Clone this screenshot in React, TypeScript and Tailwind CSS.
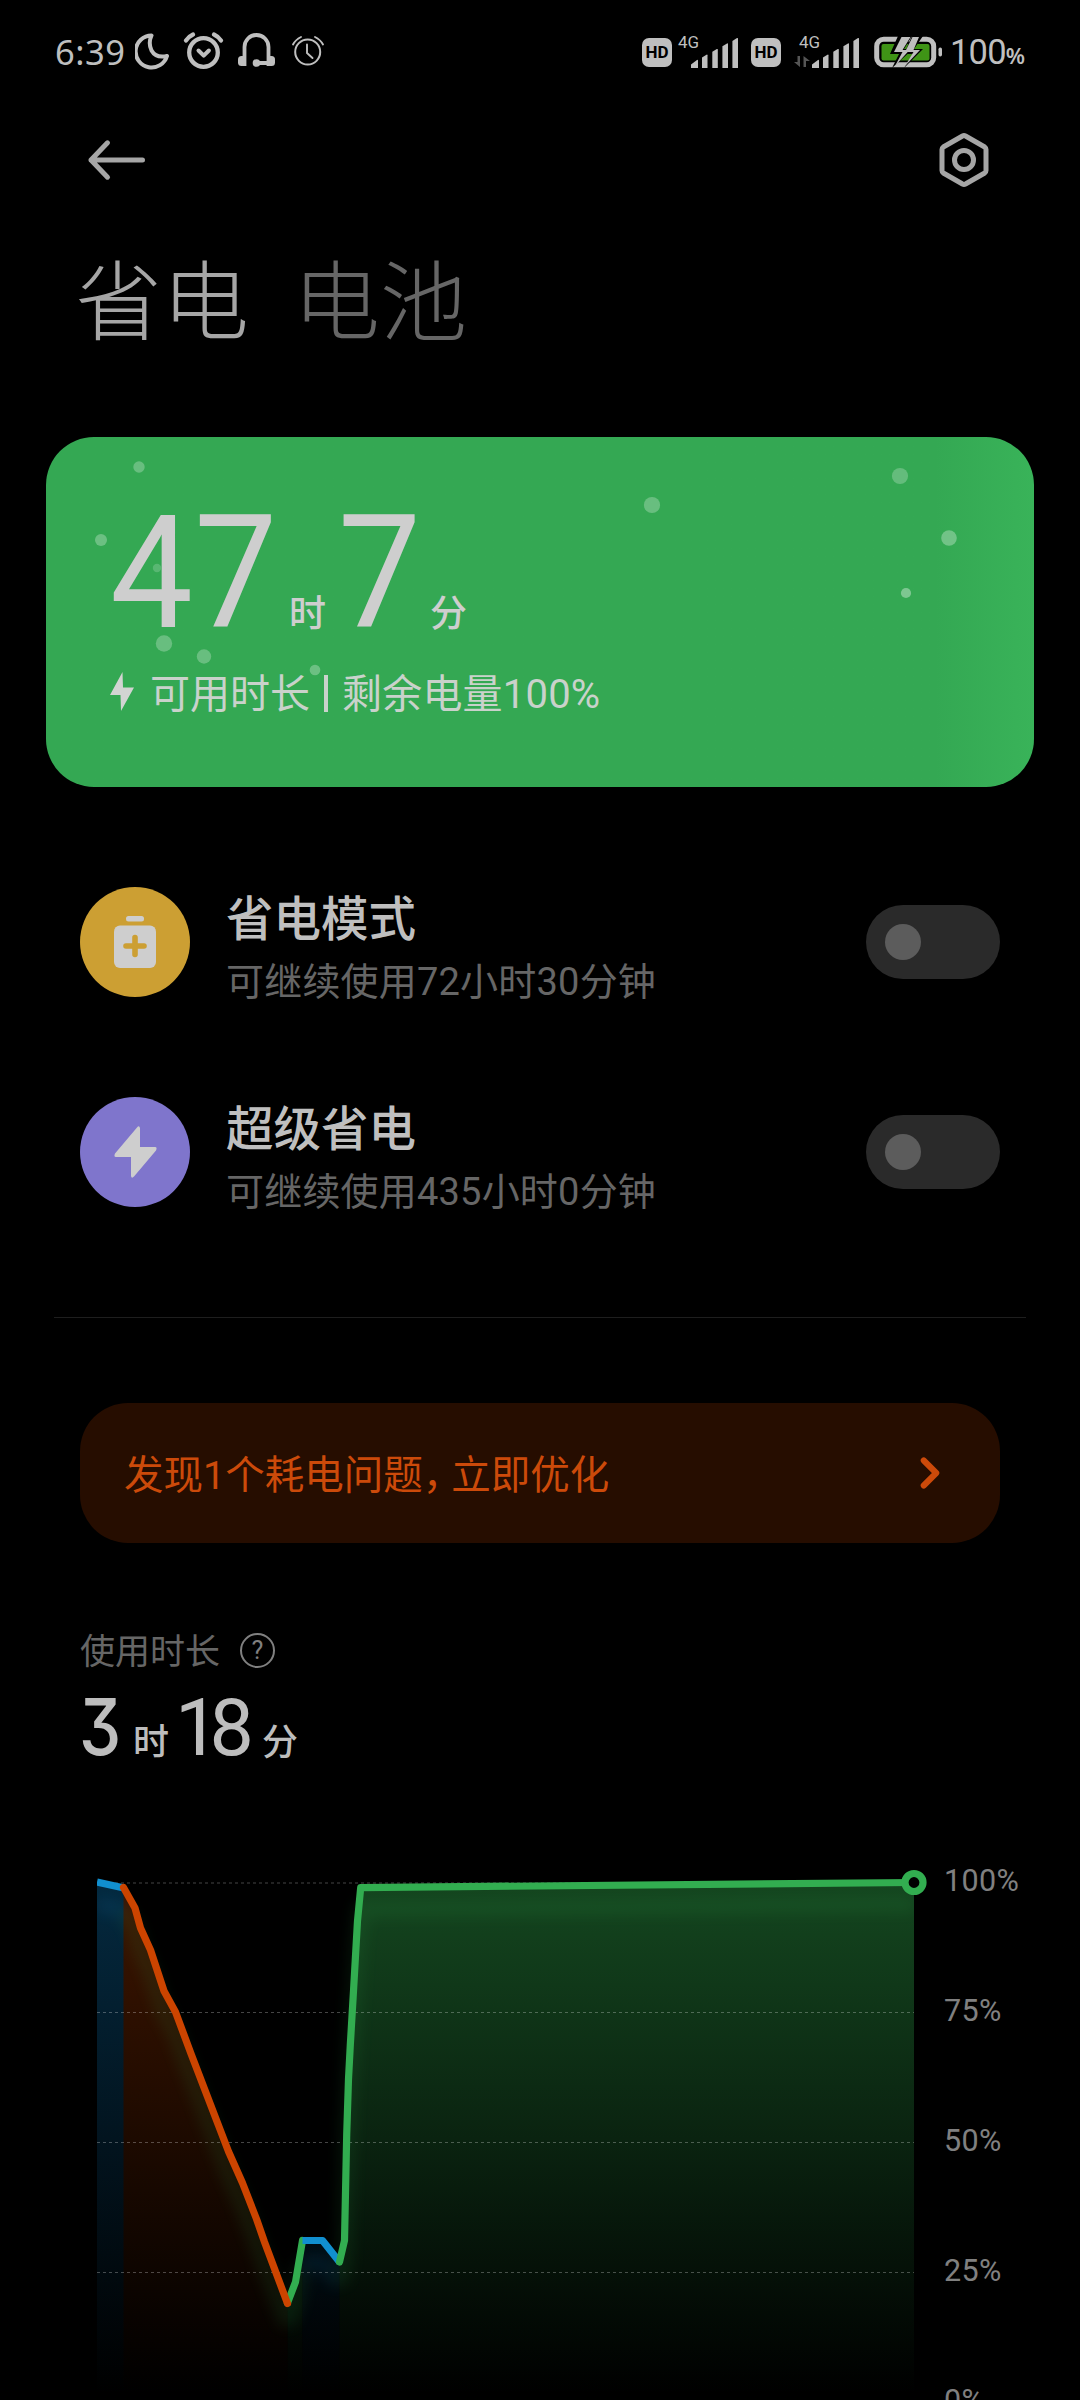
import { ChevronRight } from 'lucide-react'
import type { ReactNode } from 'react'

type Trecho = {
  tipo: 'azul' | 'laranja' | 'verde'
  pontos: [number, number][]
}

const CORES = {
  azul: '#118fcf',
  laranja: '#cc4400',
  verde: '#32ad50',
}

// x from the left edge of the chart, y from the 100% line
const trechos: Trecho[] = [
  { tipo: 'azul', pontos: [[0, -1], [27, 5]] },
  { tipo: 'verde', pontos: [[190.5, 420], [198.5, 399], [205.5, 357.5]] },
  {
    tipo: 'laranja',
    pontos: [
      [26.5, 4.5], [38, 25], [43.5, 45], [53.5, 67], [67, 108], [78.5, 129], [94.5, 172],
      [131.5, 268.5], [145.5, 300], [159.5, 336], [167.5, 359], [190.5, 420.5],
    ],
  },
  { tipo: 'azul', pontos: [[205.5, 357.5], [225.5, 357.5], [242.5, 379]] },
  {
    tipo: 'verde',
    pontos: [
      [242.5, 379], [247.5, 357.5], [249.7, 252], [251.5, 196], [253.3, 162], [256.5, 108],
      [260.5, 38], [263.7, 4.6], [817, -0.5],
    ],
  },
]

const bolhas = [
  { x: 93, y: 30, r: 5.7, o: 0.26 },
  { x: 55, y: 103, r: 6, o: 0.28 },
  { x: 111, y: 131, r: 4.2, o: 0.18 },
  { x: 118, y: 206.5, r: 8.2, o: 0.26 },
  { x: 158, y: 219.5, r: 7.2, o: 0.26 },
  { x: 269, y: 233, r: 5.3, o: 0.28 },
  { x: 606, y: 68, r: 8.1, o: 0.26 },
  { x: 854, y: 39, r: 8.1, o: 0.24 },
  { x: 903, y: 101, r: 7.8, o: 0.3 },
  { x: 860, y: 156, r: 5.1, o: 0.36 },
]

const modos = [
  { nome: '省电模式', detalhe: '可继续使用72小时30分钟', cor: 'bg-[#cc9f33]', icone: <IconeBateria /> },
  { nome: '超级省电', detalhe: '可继续使用435小时0分钟', cor: 'bg-[#7f75cc]', icone: <IconeRaio /> },
]

function IconeBateria() {
  return (
    <svg width="42" height="52" viewBox="0 0 42 52">
      <rect x="12" y="0" width="18" height="5.5" rx="2.5" fill="#cecece" />
      <rect x="0" y="9.5" width="42" height="42.5" rx="6" fill="#cecece" />
      <path d="M21 21.5v17M12 30h18" stroke="#cc9f33" strokeWidth="5.6" strokeLinecap="round" />
    </svg>
  )
}

function IconeRaio() {
  return (
    <svg width="43" height="52" viewBox="0 0 43 52">
      <path
        d="M23 1.4 1 27.5Q-.5 31 2 31H17V50Q17.5 53 20 50.6L42 24.5Q43.5 21 41 21H26V2Q25.3-1 23 1.4Z"
        fill="#cecece"
      />
    </svg>
  )
}

function Pontos(p: [number, number][]) {
  return p.map(([x, y]) => `${x},${y}`).join(' ')
}

function Sinal() {
  return (
    <svg width="48" height="30" viewBox="0 0 48 30" fill="#bfbfbf">
      <path d="M0 30v-3.5L6 22q1-.5 1 .5V30z" />
      <path d="M11 30V19.500l4.500-2.800q1-.4 1 .6V30z" />
      <path d="M21.300 30V13.800l4.500-2.800q1-.4 1 .6V30z" />
      <path d="M31.400 30V8.300l4.600-2.900q1-.4 1 .6V30z" />
      <path d="M41.400 30V3l4.600-2.900q1-.4 1 .6V30z" />
    </svg>
  )
}

function Hd() {
  return (
    <div className="flex h-[29px] w-[30px] items-center justify-center rounded-[7px] bg-[#bfbfbf] text-[17px] leading-none font-bold text-black">
      HD
    </div>
  )
}

function BarraStatus() {
  return (
    <div className="flex h-[104px] items-center pl-[55px] text-[#bfbfbf]">
      <span className="w-[80px] font-['Noto_Sans'] text-[34.500px] leading-none tracking-[0.500px]">6:39</span>
      <svg className="shrink-0" width="195" height="40" viewBox="135 33 195 40" fill="none" stroke="#bfbfbf" strokeLinecap="round" strokeLinejoin="round">
        <path d="M151.500 36.500A16 16 0 1 0 167 57Q156 59.500 151.500 51.500 148 44 151.500 36.500Z" strokeWidth="4" />
        <circle cx="203.500" cy="53.500" r="14.300" strokeWidth="4.300" />
        <path d="m198.500 51.500 5.200 5.200 5.200-5.200" strokeWidth="4" />
        <path d="M186 41.500q3-4.200 7-6M221 41.500q-3-4.200-7-6" strokeWidth="4.200" />
        <path d="M244.500 67V48a12 12 0 0 1 24 0V67M257 64h12" strokeWidth="3.800" strokeLinecap="butt" />
        <circle cx="256.500" cy="64" r="3.800" fill="#bfbfbf" stroke="none" />
        <rect x="238" y="57" width="8" height="10" rx="3.500" fill="#bfbfbf" stroke="none" />
        <rect x="267" y="57" width="8" height="10" rx="3.500" fill="#bfbfbf" stroke="none" />
        <circle cx="307.700" cy="53" r="12.500" strokeWidth="2" />
        <path d="M307 45.500v8.500l5.500 5M293 45.500q2.500-4.800 8-7.500M323 45.500q-2.500-4.800-8-7.500" strokeWidth="1.900" />
      </svg>
      <div className="ml-[312px] flex items-center">
        <Hd />
        <div className="ml-[6px] flex h-[36px] items-start">
          <span className="w-[13px] text-[17px] leading-none">4G</span>
          <span className="mt-[4px]"><Sinal /></span>
        </div>
        <div className="ml-[12px]"><Hd /></div>
        <svg className="ml-[13px] mt-[19px]" width="16" height="11" viewBox="0 0 16 11" fill="#555">
          <path d="M3.500 0h2.500v11L0 6h3.500zM9.500 11h2.500V5H16L9.500 0z" />
        </svg>
        <div className="ml-[-11px] flex h-[36px] items-start">
          <span className="w-[13px] text-[17px] leading-none">4G</span>
          <span className="mt-[4px]"><Sinal /></span>
        </div>
        <svg className="ml-[14px]" width="70" height="32" viewBox="0 0 70 32">
          <rect x="2.700" y="3.200" width="57" height="25.600" rx="7" fill="none" stroke="#bfbfbf" strokeWidth="5" />
          <rect x="7.500" y="8" width="48" height="16.500" rx="2" fill="#3f9416" />
          <rect x="64.500" y="11.500" width="3.500" height="9" rx="1.700" fill="#bfbfbf" />
          <path d="M24 0 16 18H25L18 32 39 13H30L38 0Z" fill="#000" />
          <path d="M38 0 30 18H39L30 32 49 13H40L49 0Z" fill="#000" />
          <path d="M27.500 1 20 16H28.500L21 30 35.500 14H28.500L36.500 1Z" fill="#bfbfbf" />
          <path d="M38.500 1 31 16H39.500L31 30 46 14H39.500L45 1Z" fill="#bfbfbf" />
        </svg>
        <span className="ml-[6px] text-[34.500px] leading-none tracking-[-0.800px]">
          100<span className="font-['Noto_Sans'] text-[22px] font-semibold tracking-normal">%</span>
        </span>
      </div>
    </div>
  )
}

function Cabecalho() {
  return (
    <header className="flex h-[112px] items-center justify-between pl-[87px] pr-[90px]">
      <button aria-label="返回">
        <svg width="60" height="42" viewBox="0 0 60 42" fill="none" stroke="#a6a6a6" strokeWidth="5" strokeLinecap="round" strokeLinejoin="round">
          <path d="M55.500 21H4M20.500 3.800 4 21l16.500 17.200" />
        </svg>
      </button>
      <button aria-label="设置">
        <svg width="52" height="56" viewBox="0 0 52 56" fill="none" stroke="#a6a6a6" strokeWidth="5" strokeLinejoin="round">
          <path d="M24.500 4q1.500-.8 3 0l19.200 11q1.300.9 1.300 2.400v21.200q0 1.500-1.300 2.400L27.500 52q-1.500.8-3 0L5.300 41Q4 40.100 4 38.600V17.400q0-1.500 1.300-2.400z" />
          <circle cx="26" cy="28" r="9.500" />
        </svg>
      </button>
    </header>
  )
}

function CartaoBateria() {
  return (
    <section className="relative mx-[46px] h-[350px] overflow-hidden rounded-[48px] bg-linear-to-r from-[#34a853] from-90% to-[#39b359] pl-[64px] pt-[58px] text-[#cecece]">
      <svg className="absolute inset-0" width="988" height="350">
        {bolhas.map((b, i) => (
          <circle key={i} cx={b.x} cy={b.y} r={b.r} fill="#fff" opacity={b.o} />
        ))}
      </svg>
      <div className="relative flex items-baseline leading-none">
        <span className="w-[178px] origin-left scale-x-94 text-[157px] tracking-[1.500px]">47</span>
        <span className="w-[50px] pl-px text-[37px] font-medium">时</span>
        <span className="w-[92px] origin-left scale-x-94 text-[157px]">7</span>
        <span className="text-[37px] font-medium">分</span>
      </div>
      <div className="relative mt-[20px] flex h-[40px] items-center">
        <svg width="24" height="40" viewBox="0 0 24 40" fill="#d2d4d2">
          <path d="M12.500 0 0 23H10.500L11 39 24 15.500H13Z" />
        </svg>
        <span className="mt-[5px] ml-[16px] text-[40px] leading-none text-[#c9d2cb]">可用时长</span>
        <span className="mt-[2px] ml-[14px] h-[37px] w-[4px] bg-[#c9d2cb]" />
        <span className="mt-[5px] ml-[14px] text-[40px] leading-none tracking-[0.200px] text-[#c9d2cb]">剩余电量100%</span>
      </div>
    </section>
  )
}

function LinhaModo({ nome, detalhe, cor, icone }: { nome: string; detalhe: string; cor: string; icone: ReactNode }) {
  return (
    <div className="flex h-[110px] items-center">
      <div className={`${cor} flex h-[110px] w-[110px] items-center justify-center rounded-full`}>{icone}</div>
      <div className="ml-[36px] flex-1 pt-[19px]">
        <div className="text-[47.500px] leading-[58px] font-medium text-[#bfbfbf]">{nome}</div>
        <div className="mt-[3px] text-[38px] leading-[60px] tracking-[0.200px] text-[#666]">{detalhe}</div>
      </div>
      <div className="flex h-[74px] w-[134px] items-center rounded-full bg-[#2a2a2a] pl-[19px]">
        <div className="h-[36px] w-[36px] rounded-full bg-[#5c5c5c]" />
      </div>
    </div>
  )
}

function Grafico() {
  return (
    <div className="mt-[76px] flex pl-[97px]">
      <svg width="833" height="556" viewBox="0 -40 833 556">
        <defs>
          <linearGradient id="azul" gradientUnits="userSpaceOnUse" x1="0" y1="0" x2="0" y2="510">
            <stop offset="0" stopColor="#04293f" />
            <stop offset="0.5" stopColor="#02141f" />
            <stop offset="1" stopColor="#000" />
          </linearGradient>
          <linearGradient id="laranja" gradientUnits="userSpaceOnUse" x1="0" y1="0" x2="0" y2="510">
            <stop offset="0" stopColor="#3d1500" />
            <stop offset="0.5" stopColor="#1d0a00" />
            <stop offset="1" stopColor="#000" />
          </linearGradient>
          <linearGradient id="verde" gradientUnits="userSpaceOnUse" x1="0" y1="0" x2="0" y2="510">
            <stop offset="0" stopColor="#14461f" />
            <stop offset="0.5" stopColor="#0a2310" />
            <stop offset="1" stopColor="#000" />
          </linearGradient>
          <filter id="brilho" filterUnits="userSpaceOnUse" x="-40" y="-40" width="900" height="560">
            <feGaussianBlur stdDeviation="7" />
          </filter>
          <clipPath id="area">
            <rect x="0" y="0" width="817" height="520" />
          </clipPath>
        </defs>
        {trechos.map((t, i) => {
          const x0 = t.pontos[0][0]
          const x1 = t.pontos[t.pontos.length - 1][0]
          return <polygon key={i} points={`${x0},520 ${Pontos(t.pontos)} ${x1},520`} fill={`url(#${t.tipo})`} />
        })}
        <g clipPath="url(#area)">
          <g filter="url(#brilho)" opacity="0.11" transform="translate(0 22)">
            {trechos.map((t, i) => (
              <polyline key={i} points={Pontos(t.pontos)} fill="none" stroke={t.tipo === 'azul' ? '#118fcf' : '#32ad50'} strokeWidth="16" />
            ))}
          </g>
        </g>
        {[0, 129.500, 259.500, 389.500].map((y) => (
          <line key={y} x1="0" x2="817" y1={y} y2={y} stroke="#fff" strokeOpacity="0.27" strokeWidth="1" strokeDasharray="3 3" />
        ))}
        {trechos.map((t, i) => (
          <polyline
            key={i}
            points={Pontos(t.pontos)}
            fill="none"
            stroke={CORES[t.tipo]}
            strokeWidth="7.200"
            strokeLinecap={t.tipo === 'azul' ? 'butt' : 'round'}
            strokeLinejoin="round"
          />
        ))}
        <circle cx="817" cy="-0.500" r="9" fill="#000" stroke="#32ad50" strokeWidth="7.200" />
      </svg>
      <div className="ml-[14px] flex flex-col pt-[23px] text-[30.500px] leading-[30px] tracking-[0.400px] text-[#808080]">
        {['100%', '75%', '50%', '25%', '0%'].map((v) => (
          <span key={v} className="h-[130px]">{v}</span>
        ))}
      </div>
    </div>
  )
}

export default function App() {
  return (
    <div className="h-[2400px] w-[1080px] overflow-hidden bg-black font-[Roboto,'Noto_Sans_CJK_SC',sans-serif]">
      <BarraStatus />
      <Cabecalho />

      <nav className="mt-[46px] flex h-[84px] gap-[44px] pl-[75px] text-[87px] leading-[84px] font-light">
        <span className="text-[#a6a6a6]">省电</span>
        <span className="text-[#666]">电池</span>
      </nav>

      <div className="h-[91px]" />
      <CartaoBateria />

      <div className="mt-[100px] flex flex-col gap-[100px] px-[80px]">
        {modos.map((m) => (
          <LinhaModo key={m.nome} {...m} />
        ))}
      </div>

      <div className="mx-[54px] mt-[110px] h-px bg-[#1e1e1e]" />

      <div className="mx-[80px] mt-[85px] flex h-[140px] items-center justify-between rounded-[48px] bg-[#260d00] pl-[44px] pr-[45px] text-[#cc4a0a]">
        <span className="pt-[5px] text-[39.500px] leading-none">
          发现1个耗电问题<span className="tracking-[-11px]">，</span>立即优化
        </span>
        <ChevronRight className="h-[50px] w-[50px]" strokeWidth={2.900} />
      </div>

      <div className="mt-[86px] flex h-[42px] items-center pl-[80px] text-[35px] leading-none text-[#666]">
        <span className="pt-[5px]">使用时长</span>
        <span className="ml-[20px] flex h-[35px] w-[35px] items-center justify-center rounded-full border-2 border-[#808080] text-[25px] text-[#808080]">?</span>
      </div>
      <div className="mt-[17px] mb-px flex h-[79px] items-baseline pl-[79px] leading-none text-[#bdbdbd]">
        <span className="w-[54px] origin-left scale-x-86 font-[Inter] text-[78px] font-medium [font-feature-settings:'cv09']">3</span>
        <span className="w-[42px] text-[36px] font-medium">时</span>
        <span className="w-[87px] text-[79px] tracking-[-10px]">18</span>
        <span className="text-[36px] font-medium">分</span>
      </div>

      <Grafico />
    </div>
  )
}
